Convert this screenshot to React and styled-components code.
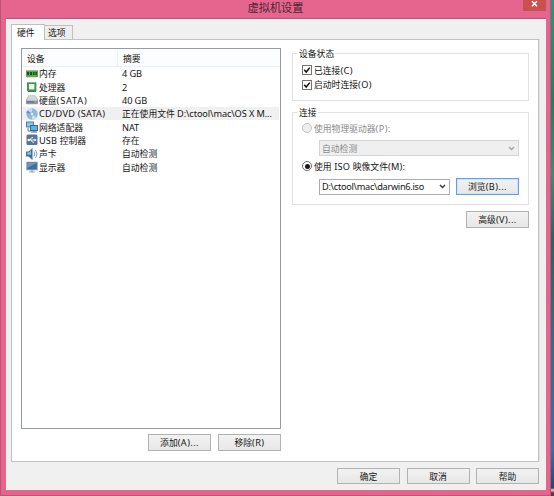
import { useState } from "react";
import styled, { createGlobalStyle } from "styled-components";

const GlobalStyle = createGlobalStyle`
  * {
    box-sizing: border-box;
  }
  body {
    margin: 0;
    overflow: hidden;
  }
`;

const Desktop = styled.div`
  width: 554px;
  height: 496px;
  display: flex;
  background: linear-gradient(
    #219c76 0,
    #17845f 100px,
    #2f9277 175px,
    #1d6a60 240px,
    #2c6f86 330px,
    #2e74a6 450px,
    #1c4a78 488px,
    #d8d8d8 490px,
    #7c2a31 493px
  );
  color: #151515;
  font-family: "Noto Sans CJK SC", sans-serif;
  font-size: 8.8px;
  line-height: 13px;
  white-space: nowrap;
`;

const Window = styled.div`
  width: 551px;
  height: 496px;
  padding: 0 5px;
  display: flex;
  flex-direction: column;
  background: #e6658f;
  border: solid #bd5277;
  border-width: 0 1px 1px;
`;

const TitleBar = styled.div`
  height: 18px;
  flex: none;
  position: relative;
  text-align: center;
  font-size: 11.2px;
  line-height: 14px;
  color: #4d2532;
`;

const Close = styled.button`
  position: absolute;
  top: 0;
  right: -1px;
  width: 23px;
  height: 11px;
  padding: 0;
  border: 0;
  display: flex;
  justify-content: center;
  background: #c8504f;
`;

const Body = styled.div`
  width: 540px;
  flex: 1;
  margin-bottom: 5px;
  padding: 5px 7px 0 5px;
  background: #f0f0f0;
  border-top: 1px solid #b5507a;
  box-shadow: inset 0 1px #fff;
`;

const Tabs = styled.div`
  height: 15px;
  display: flex;
  align-items: flex-end;
`;

const Tab = styled.button`
  width: ${(p) => (p.$active ? 34 : 28)}px;
  height: ${(p) => (p.$active ? 16 : 14)}px;
  margin-bottom: ${(p) => (p.$active ? -1 : 0)}px;
  padding: 0 0 0 ${(p) => (p.$active ? 5 : 3)}px;
  z-index: 1;
  text-align: left;
  font: inherit;
  line-height: 14px;
  color: inherit;
  background: ${(p) => (p.$active ? "#fff" : "#eee")};
  border: 1px solid #bfbfbf;
  border-bottom: 0;
  border-left-width: ${(p) => (p.$active ? 1 : 0)}px;
`;

const Panel = styled.div`
  width: 528px;
  height: 423px;
  padding: 8px 9px 0 9px;
  display: flex;
  justify-content: space-between;
  background: #fff;
  border: 1px solid #c3c3c3;
  box-shadow: 1px 0 #e0e0e0;
`;

const Left = styled.div`
  width: 260px;
`;

const Right = styled.div`
  width: 237px;
  padding-top: 5px;
`;

const List = styled.div`
  height: 381px;
  border: 1px solid #979ba3;
`;

const ListHead = styled.div`
  height: 18px;
  display: flex;
  align-items: center;
  padding-top: 3px;
  background: #fcfdfe;
  border-bottom: 1px solid #e8f1f8;
`;

const HeadCell = styled.div`
  width: ${(p) => p.$width}px;
  height: 16px;
  line-height: 16px;
  padding-left: 5px;
  border-right: ${(p) => (p.$last ? 0 : 1)}px solid #e8f1f8;
`;

const Row = styled.div`
  height: 13.35px;
  margin-right: 1px;
  padding-left: 4px;
  display: flex;
  align-items: center;
  background: ${(p) => (p.$selected ? "#f0f0f0" : "none")};
`;

const Device = styled.div`
  width: 96px;
  display: flex;
  align-items: center;
  gap: 1px;

  svg {
    flex: none;
  }
`;

const Buttons = styled.div`
  display: flex;
  justify-content: flex-end;
  gap: ${(p) => p.$gap}px;
  margin-top: ${(p) => p.$top}px;
`;

const Button = styled.button`
  width: 63px;
  height: ${(p) => p.$height || 17}px;
  padding: 0;
  flex: none;
  font: inherit;
  color: inherit;
  background: linear-gradient(#f2f2f2, #e7e7e7);
  border: 1px solid ${(p) => (p.$focus ? "#5ea3ea" : "#b2b2b2")};
  box-shadow: ${(p) => (p.$focus ? "inset 0 0 0 1px #cfe4fa" : "none")};
`;

const Group = styled.fieldset`
  height: ${(p) => p.$height}px;
  min-width: 0;
  margin: 0 0 ${(p) => p.$gap}px;
  padding: ${(p) => p.$top || 0}px 9px 0;
  border: 1px solid #e1e1e1;
  position: relative;
`;

const Legend = styled.div`
  position: absolute;
  top: -7px;
  left: 5px;
  padding: 0 1px;
  background: #fff;
`;

const Option = styled.label`
  height: ${(p) => p.$height}px;
  display: flex;
  align-items: center;
  gap: 2px;
  color: ${(p) => (p.$disabled ? "#8a8a8a" : "inherit")};
`;

const Check = styled.span`
  width: 10px;
  height: 10px;
  display: flex;
  background: #fff;
  border: 1px solid #737373;
`;

const Radio = styled.span`
  width: 10px;
  height: 10px;
  display: flex;
  align-items: center;
  justify-content: center;
  border-radius: 50%;
  background: ${(p) => (p.$disabled ? "#eee" : "#fff")};
  border: 1px solid ${(p) => (p.$disabled ? "#c4c4c4" : "#6c6c6c")};
`;

const Dot = styled.span`
  width: 5px;
  height: 5px;
  border-radius: 50%;
  background: #1a1a1a;
`;

const Line = styled.div`
  display: flex;
  align-items: center;
  justify-content: space-between;
  margin: ${(p) => p.$top}px 0 0 17px;
`;

const Select = styled.div`
  width: ${(p) => p.$width}px;
  height: 16px;
  padding: 0 3px 0 2px;
  display: flex;
  align-items: center;
  justify-content: space-between;
  color: ${(p) => (p.$disabled ? "#8a8a8a" : "inherit")};
  background: ${(p) => (p.$disabled ? "#efefef" : "#fff")};
  border: 1px solid ${(p) => (p.$disabled ? "#d5d5d5" : "#ababb2")};
`;

const Latin = styled.span`
  font-family: "Noto Sans", sans-serif;
  font-size: 9.2px;
  letter-spacing: ${(p) => p.$spacing}px;
  white-space: pre;
`;

// Latin runs get their own face, like the Tahoma / SimSun mix on Windows
const Text = ({ children, spacing = 0.4 }) => (
  <span>
    {children.split(/([\x20-\x7e]+)/).map((part, i) =>
      i % 2 ? (
        <Latin key={i} $spacing={spacing}>
          {part}
        </Latin>
      ) : (
        part
      )
    )}
  </span>
);

const Icon = ({ children }) => (
  <svg width="12" height="12" viewBox="0 0 12 12">
    {children}
  </svg>
);

const MemoryIcon = () => (
  <Icon>
    <path d="M0 2h12v7H0z" fill="#56a653" />
    <path d="M0 2h12v1H0z" fill="#8ccc7e" />
    <path d="M1 4h2v3H1zM4 4h2v3H4zM7 4h1.5v3H7zM9.5 4H11v3H9.5z" fill="#23482e" />
    <path d="M1 9h10" stroke="#a9a65b" strokeDasharray="1 .6" />
  </Icon>
);

const CpuIcon = () => (
  <Icon>
    <rect x="1" y="1" width="9.4" height="9.4" rx="1" fill="#3b9b50" />
    <path d="M1.5 1.5h8" stroke="#74bd7b" />
    <rect x="3" y="3" width="5.4" height="5.4" fill="#f0f7ee" />
    <path d="M2 10.4h8" stroke="#277d3c" />
  </Icon>
);

const DiskIcon = () => (
  <Icon>
    <path d="M2.5 1.5h7L12 6v3.5q0 .8-.8.8H.8Q0 10.3 0 9.5V6z" fill="#9da6b2" />
    <path d="M2.7 2h6.6l2 4.5H.8z" fill="#d1d7df" />
    <path d="M.5 7h11v2.3H.5z" fill="#737e8c" />
    <path d="M8.5 8h2" stroke="#b8df97" />
  </Icon>
);

const DiscIcon = () => (
  <Icon>
    <circle cx="6" cy="6" r="5.7" fill="#8db8df" />
    <path d="M6 6 1.6 2.4A5.7 5.7 0 0 1 6 .3zM6 6l4.4 3.6A5.7 5.7 0 0 1 6 11.7z" fill="#c8def1" />
    <path d="M6 6 .4 5a5.6 5.6 0 0 1 1.2-2.6z" fill="#618fc4" />
    <circle cx="6" cy="6" r="1.8" fill="#e9f2fa" stroke="#779fca" strokeWidth=".6" />
  </Icon>
);

const NetworkIcon = () => (
  <Icon>
    <path d="M0 .5h8v6H0z" fill="#477fae" />
    <path d="M1 1.5h6v4H1z" fill="#8cc5ea" />
    <path d="M2 7v3h3" fill="none" stroke="#63788d" />
    <path d="M4 4h8v6H4z" fill="#306999" />
    <path d="M5 5h6v4H5z" fill="#62b1e4" />
    <path d="M5 11h6M8 10v1" stroke="#52687d" />
  </Icon>
);

const UsbIcon = () => (
  <Icon>
    <rect x=".5" y=".5" width="11" height="10.5" rx="1.5" fill="#547596" />
    <path d="M2 6h7M4 6l1.7-2.3h1.5M5 6l1.5 2.2H8" fill="none" stroke="#fff" strokeWidth=".9" />
    <path d="M8.5 4.5 10.7 6 8.5 7.5z" fill="#fff" />
    <circle cx="2.7" cy="6" r="1.2" fill="#fff" />
  </Icon>
);

const SoundIcon = () => (
  <Icon>
    <path d="M0 3.5h2.5L6.5 0v12L2.5 8.5H0z" fill="#3f709f" />
    <path d="M1 4.5h2l2-2.3v4.5L1 6.5z" fill="#91bddf" />
    <path d="M8 3.5q1.7 2.5 0 5M9.5 2q3 4 0 8" fill="none" stroke="#5f9bcd" strokeWidth=".9" />
  </Icon>
);

const DisplayIcon = () => (
  <Icon>
    <rect x=".3" y=".8" width="11.4" height="8.5" rx=".6" fill="#829ab4" />
    <path d="M1.2 1.7h9.6v6.6H1.2z" fill="#436f9f" />
    <path d="M1.2 1.7h9.6L1.2 7z" fill="#6e95bd" />
    <path d="M4.7 9.3h2.6v1.2H9v1H3v-1h1.7z" fill="#a1abb6" />
  </Icon>
);

const Chevron = ({ color = "#3c3c3c" }) => (
  <svg width="7" height="5" viewBox="0 0 7 5">
    <path d="M1 1l2.5 2.5L6 1" fill="none" stroke={color} strokeWidth="1.5" />
  </svg>
);

const Tick = () => (
  <svg width="8" height="8" viewBox="0 0 8 8">
    <path d="M1.2 3.8l2 2.2L6.8 1.6" fill="none" stroke="#111" strokeWidth="1.5" />
  </svg>
);

const devices = [
  { icon: MemoryIcon, name: "内存", info: "4 GB" },
  { icon: CpuIcon, name: "处理器", info: "2" },
  { icon: DiskIcon, name: "硬盘(SATA)", info: "40 GB", spacing: 0.8 },
  { icon: DiscIcon, name: "CD/DVD (SATA)", info: "正在使用文件 D:\\ctool\\mac\\OS X M...", spacing: 0.22 },
  { icon: NetworkIcon, name: "网络适配器", info: "NAT" },
  { icon: UsbIcon, name: "USB 控制器", info: "存在", spacing: 0.15 },
  { icon: SoundIcon, name: "声卡", info: "自动检测" },
  { icon: DisplayIcon, name: "显示器", info: "自动检测" },
];

const App = () => {
  const [selected, setSelected] = useState(3);

  return (
    <>
      <GlobalStyle />
      <Desktop>
        <Window>
          <TitleBar>
            虚拟机设置
            <Close>
              <svg width="7" height="8" viewBox="0 0 7 8">
                <path d="M1 1.2l5 5M6 1.2l-5 5" stroke="#fff" strokeWidth="1.5" />
              </svg>
            </Close>
          </TitleBar>
          <Body>
            <Tabs>
              <Tab $active>硬件</Tab>
              <Tab>选项</Tab>
            </Tabs>
            <Panel>
              <Left>
                <List>
                  <ListHead>
                    <HeadCell $width={96}>设备</HeadCell>
                    <HeadCell $last>摘要</HeadCell>
                  </ListHead>
                  {devices.map(({ icon: DeviceIcon, name, info, spacing }, i) => (
                    <Row key={name} $selected={i === selected} onClick={() => setSelected(i)}>
                      <Device>
                        <DeviceIcon />
                        <Text spacing={spacing}>{name}</Text>
                      </Device>
                      <Text spacing={-0.1}>{info}</Text>
                    </Row>
                  ))}
                </List>
                <Buttons $gap={7} $top={5}>
                  <Button>
                    <Text>添加(A)...</Text>
                  </Button>
                  <Button>
                    <Text>移除(R)</Text>
                  </Button>
                </Buttons>
              </Left>
              <Right>
                <Group $height={48} $gap={11} $top={9}>
                  <Legend>设备状态</Legend>
                  <Option $height={14.5}>
                    <Check>
                      <Tick />
                    </Check>
                    <Text>已连接(C)</Text>
                  </Option>
                  <Option $height={14.5}>
                    <Check>
                      <Tick />
                    </Check>
                    <Text>启动时连接(O)</Text>
                  </Option>
                </Group>
                <Group $height={93} $gap={6}>
                  <Legend>连接</Legend>
                  <Option $height={30} $disabled>
                    <Radio $disabled />
                    <Text>使用物理驱动器(P):</Text>
                  </Option>
                  <Line $top={-3}>
                    <Select $width={201} $disabled>
                      <Text>自动检测</Text>
                      <Chevron color="#a5a5a5" />
                    </Select>
                  </Line>
                  <Option $height={20}>
                    <Radio>
                      <Dot />
                    </Radio>
                    <Text spacing={0.2}>使用 ISO 映像文件(M):</Text>
                  </Option>
                  <Line $top={2}>
                    <Select $width={131}>
                      <Text spacing={-0.28}>{"D:\\ctool\\mac\\darwin6.iso"}</Text>
                      <Chevron />
                    </Select>
                    <Button $focus>
                      <Text>浏览(B)...</Text>
                    </Button>
                  </Line>
                </Group>
                <Buttons $top={0}>
                  <Button>
                    <Text>高级(V)...</Text>
                  </Button>
                </Buttons>
              </Right>
            </Panel>
            <Buttons $gap={6.5} $top={6}>
              <Button $height={16}>确定</Button>
              <Button $height={16}>取消</Button>
              <Button $height={16}>帮助</Button>
            </Buttons>
          </Body>
        </Window>
      </Desktop>
    </>
  );
};

export default App;
